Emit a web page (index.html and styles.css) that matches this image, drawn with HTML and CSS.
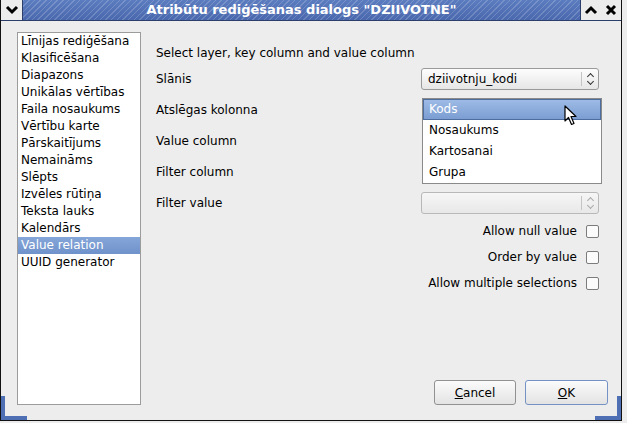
FILE: index.html
```html
<!DOCTYPE html>
<html lang="lv">
<head>
    <meta charset="UTF-8">
    <title>Atribūtu rediģēšanas dialogs "DZIIVOTNE"</title>
    <link rel="stylesheet" href="styles.css">
</head>
<body>
    <div class="window">
        <div class="titlebar">
            <div class="tb-btn tb-menu">
                <svg width="14" height="10" viewBox="0 0 14 10"><polyline points="2,2 7,7 12,2" fill="none" stroke="#000" stroke-width="3"/></svg>
            </div>
            <div class="tb-title">Atribūtu rediģēšanas dialogs "DZIIVOTNE"</div>
            <div class="tb-btn">
                <svg width="14" height="10" viewBox="0 0 14 10"><polyline points="2,8 7,3 12,8" fill="none" stroke="#000" stroke-width="3"/></svg>
            </div>
            <div class="tb-btn">
                <svg width="12" height="12" viewBox="0 0 12 12"><path d="M2 2 L10 10 M10 2 L2 10" stroke="#000" stroke-width="3"/></svg>
            </div>
        </div>

        <div class="client">
            <ul class="widget-list">
                <li>Līnijas rediģēšana</li>
                <li>Klasificēšana</li>
                <li>Diapazons</li>
                <li>Unikālas vērtības</li>
                <li>Faila nosaukums</li>
                <li>Vērtību karte</li>
                <li>Pārskaitījums</li>
                <li>Nemaināms</li>
                <li>Slēpts</li>
                <li>Izvēles rūtiņa</li>
                <li>Teksta lauks</li>
                <li>Kalendārs</li>
                <li class="selected">Value relation</li>
                <li>UUID generator</li>
            </ul>

            <div class="panel">
                <div class="form">
                    <p class="hint">Select layer, key column and value column</p>

                    <div class="field">
                        <span>Slānis</span>
                        <div class="combo"><span class="combo-text">dziivotnju_kodi</span><span class="combo-arrows"></span></div>
                    </div>
                    <div class="field">
                        <span>Atslēgas kolonna</span>
                        <div class="combo-slot">
                            <ul class="popup">
                                <li class="current">Kods</li>
                                <li>Nosaukums</li>
                                <li>Kartosanai</li>
                                <li>Grupa</li>
                            </ul>
                            <svg class="cursor" width="14" height="22" viewBox="0 0 14 22"><path d="M1 1 L1 16 L4.5 12.5 L7.5 19.5 L10 18.5 L7 11.5 L12 11.5 Z" fill="#fff" stroke="#000" stroke-width="1.2" stroke-linejoin="round"/></svg>
                        </div>
                    </div>
                    <div class="field">
                        <span>Value column</span>
                    </div>
                    <div class="field">
                        <span>Filter column</span>
                    </div>
                    <div class="field">
                        <span>Filter value</span>
                        <div class="combo disabled"><span class="combo-text"></span><span class="combo-arrows"></span></div>
                    </div>

                    <div class="checks">
                        <label class="check">Allow null value <span class="box"></span></label>
                        <label class="check">Order by value <span class="box"></span></label>
                        <label class="check">Allow multiple selections <span class="box"></span></label>
                    </div>
                </div>

                <div class="buttons">
                    <button><u>C</u>ancel</button>
                    <button class="default"><u>O</u>K</button>
                </div>
            </div>
        </div>

        <div class="grip grip-left"></div>
        <div class="grip grip-right"></div>
    </div>
</body>
</html>
```

FILE: styles.css
```css
body {
    margin: 0;
    background: #ececec;
    font-family: "DejaVu Sans", sans-serif;
    font-size: 12px;
    color: #000;
}
.window {
    position: relative;
    width: 620px;
    height: 420px;
    border-left: 1px solid #111;
    border-right: 1px solid #111;
    border-bottom: 1px solid #111;
    background: #ededed;
    display: flex;
    flex-direction: column;
}

/* title bar */
.titlebar {
    display: flex;
    height: 20px;
    border-bottom: 1px solid #2c3f6a;
}
.tb-btn {
    width: 20px;
    display: flex;
    align-items: center;
    justify-content: center;
    background: #ececec;
}
.tb-menu {
    width: 21px;
    border-top-left-radius: 5px;
    border-right: 1px solid #2c3f6a;
}
.tb-title {
    flex: 1;
    text-align: center;
    color: #fff;
    font-weight: bold;
    font-size: 13px;
    line-height: 20px;
    background:
        repeating-linear-gradient(135deg, rgba(255,255,255,0.18) 0 1px, transparent 1px 4px),
        linear-gradient(#5c7cc0, #4a68ad);
    border-right: 1px solid #2c3f6a;
}

.client {
    flex: 1;
    display: flex;
    padding: 11px 0 15px 16px;
}

/* left list of widget types */
.widget-list {
    list-style: none;
    margin: 0;
    padding: 0;
    width: 122px;
    background: #fff;
    border: 1px solid #9c9c9c;
}
.widget-list li {
    height: 17px;
    line-height: 17px;
    padding-left: 3px;
    white-space: nowrap;
}
.widget-list .selected {
    background: linear-gradient(#85a6d8, #6f92cb);
    color: #fff;
}

.panel {
    flex: 1;
    display: flex;
    flex-direction: column;
    justify-content: space-between;
    padding-left: 15px;
    padding-right: 13px;
}
.form {
    padding-right: 9px;
}
.hint {
    margin: 14px 0 3px;
    line-height: 14px;
}
.field {
    display: flex;
    justify-content: space-between;
    align-items: center;
    height: 31px;
}
.combo,
.combo-slot {
    position: relative;
    width: 176px;
    height: 20px;
}
.combo {
    display: flex;
    align-items: center;
    border: 1px solid #9a9a9a;
    border-radius: 3px;
    background: linear-gradient(#fdfdfd, #e6e6e6);
}
.combo-text {
    flex: 1;
    padding-left: 6px;
}
.combo-arrows {
    position: relative;
    width: 16px;
    height: 14px;
    border-left: 1px solid #c4c4c4;
}
.combo-arrows::before,
.combo-arrows::after {
    content: "";
    position: absolute;
    left: 6px;
    width: 4px;
    height: 4px;
    border-left: 1.5px solid #333;
    border-top: 1.5px solid #333;
}
.combo-arrows::before {
    top: 2px;
    transform: rotate(45deg);
}
.combo-arrows::after {
    bottom: 2px;
    transform: rotate(-135deg);
}
.combo.disabled {
    background: linear-gradient(#f6f6f6, #e8e8e8);
    border-color: #b8b8b8;
}
.combo.disabled .combo-arrows::before,
.combo.disabled .combo-arrows::after {
    border-color: #aaa;
}

/* open drop-down of the key column combo */
.popup {
    position: absolute;
    top: -2px;
    left: -1px;
    width: 178px;
    margin: 0;
    padding: 0;
    list-style: none;
    background: #fff;
    border: 1px solid #8a8a8a;
    z-index: 2;
}
.popup li {
    height: 21px;
    line-height: 21px;
    padding-left: 6px;
}
.popup .current {
    background: linear-gradient(#9dbbe5, #7b9dd2);
    border: 1px solid #4e6d9f;
    line-height: 19px;
    height: 19px;
    padding-left: 5px;
    color: #fff;
}
.cursor {
    position: absolute;
    left: 141px;
    top: 5px;
    z-index: 3;
}

.checks {
    display: flex;
    flex-direction: column;
    align-items: flex-end;
}
.check {
    display: flex;
    align-items: center;
    gap: 9px;
    height: 26px;
}
.box {
    width: 11px;
    height: 11px;
    border: 1px solid #7c7c7c;
    border-radius: 2px;
    background: #fbfbfb;
}

.buttons {
    display: flex;
    justify-content: flex-end;
    gap: 9px;
}
button {
    width: 82px;
    height: 25px;
    font: inherit;
    border: 1px solid #919191;
    border-radius: 3px;
    background: linear-gradient(#fbfbfb, #e3e3e3);
    padding: 0;
}
button.default {
    width: 83px;
    border-color: #7493c4;
}

/* resize grips in the frame corners */
.grip {
    position: absolute;
    bottom: 0;
    width: 22px;
    height: 20px;
}
.grip-left {
    left: 0;
    border-left: 4px solid #4f6fb5;
    border-bottom: 4px solid #4f6fb5;
}
.grip-right {
    right: 0;
    border-right: 4px solid #4f6fb5;
    border-bottom: 4px solid #4f6fb5;
}
```
